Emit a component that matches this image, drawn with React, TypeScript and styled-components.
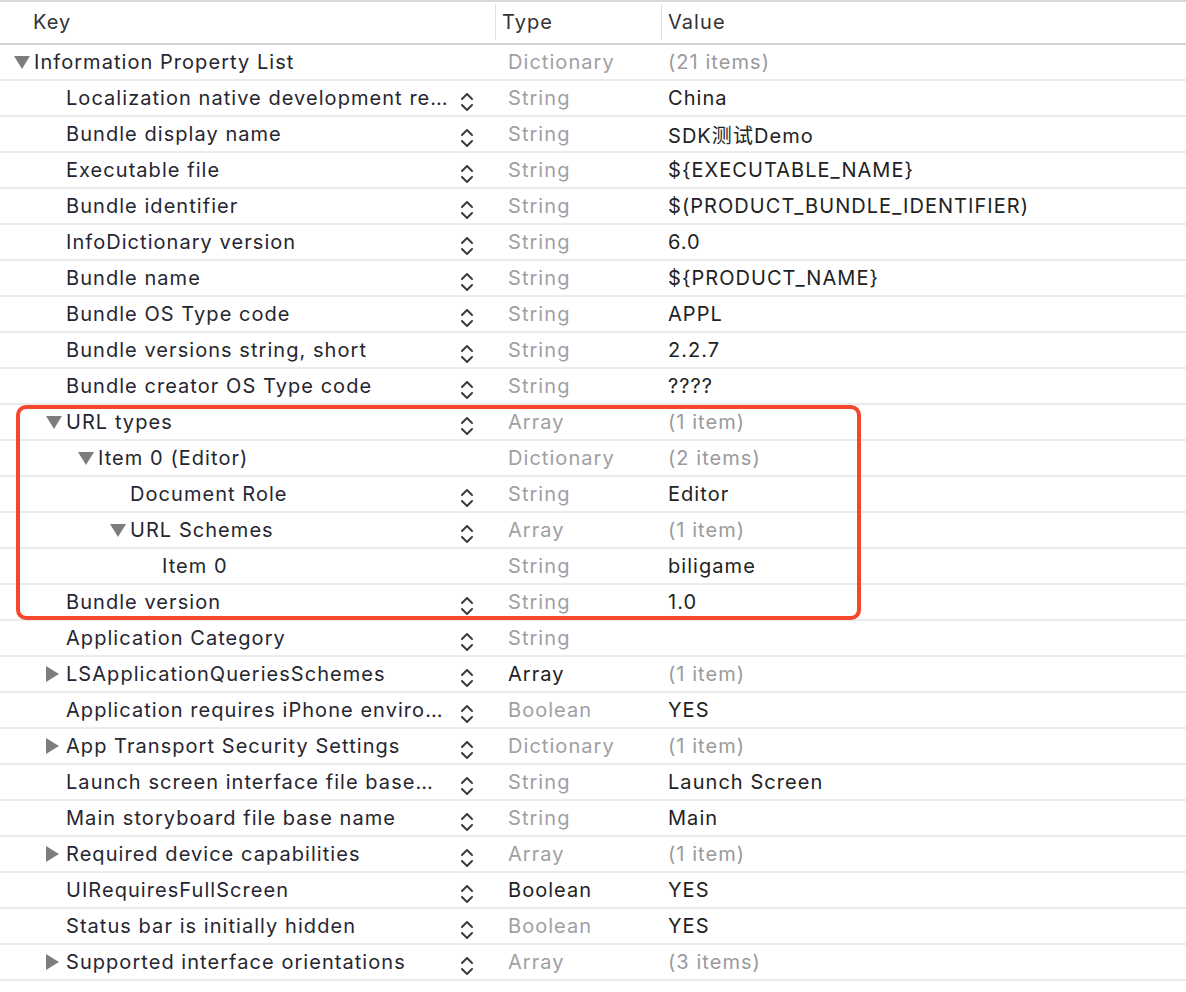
import React from "react";
import styled, { createGlobalStyle } from "styled-components";

const Global = createGlobalStyle`
  html, body { margin: 0; padding: 0; background: #ffffff; }
  body { font-family: "Inter", "Noto Sans CJK SC", sans-serif; }
`;

type RowData = {
  key: string;
  level: number;
  tri?: "down" | "right";
  stepper: boolean;
  type: string;
  typeDark?: boolean;
  value: string;
  valueGray?: boolean;
};

const rows: RowData[] = [
  { key: "Information Property List", level: 0, tri: "down", stepper: false, type: "Dictionary", value: "(21 items)", valueGray: true },
  { key: "Localization native development re…", level: 1, stepper: true, type: "String", value: "China" },
  { key: "Bundle display name", level: 1, stepper: true, type: "String", value: "SDK测试Demo" },
  { key: "Executable file", level: 1, stepper: true, type: "String", value: "${EXECUTABLE_NAME}" },
  { key: "Bundle identifier", level: 1, stepper: true, type: "String", value: "$(PRODUCT_BUNDLE_IDENTIFIER)" },
  { key: "InfoDictionary version", level: 1, stepper: true, type: "String", value: "6.0" },
  { key: "Bundle name", level: 1, stepper: true, type: "String", value: "${PRODUCT_NAME}" },
  { key: "Bundle OS Type code", level: 1, stepper: true, type: "String", value: "APPL" },
  { key: "Bundle versions string, short", level: 1, stepper: true, type: "String", value: "2.2.7" },
  { key: "Bundle creator OS Type code", level: 1, stepper: true, type: "String", value: "????" },
];

const highlighted: RowData[] = [
  { key: "URL types", level: 1, tri: "down", stepper: true, type: "Array", value: "(1 item)", valueGray: true },
  { key: "Item 0 (Editor)", level: 2, tri: "down", stepper: false, type: "Dictionary", value: "(2 items)", valueGray: true },
  { key: "Document Role", level: 3, stepper: true, type: "String", value: "Editor" },
  { key: "URL Schemes", level: 3, tri: "down", stepper: true, type: "Array", value: "(1 item)", valueGray: true },
  { key: "Item 0", level: 4, stepper: false, type: "String", value: "biligame" },
  { key: "Bundle version", level: 1, stepper: true, type: "String", value: "1.0" },
];

const rest: RowData[] = [
  { key: "Application Category", level: 1, stepper: true, type: "String", value: "" },
  { key: "LSApplicationQueriesSchemes", level: 1, tri: "right", stepper: true, type: "Array", typeDark: true, value: "(1 item)", valueGray: true },
  { key: "Application requires iPhone enviro…", level: 1, stepper: true, type: "Boolean", value: "YES" },
  { key: "App Transport Security Settings", level: 1, tri: "right", stepper: true, type: "Dictionary", value: "(1 item)", valueGray: true },
  { key: "Launch screen interface file base…", level: 1, stepper: true, type: "String", value: "Launch Screen" },
  { key: "Main storyboard file base name", level: 1, stepper: true, type: "String", value: "Main" },
  { key: "Required device capabilities", level: 1, tri: "right", stepper: true, type: "Array", value: "(1 item)", valueGray: true },
  { key: "UIRequiresFullScreen", level: 1, stepper: true, type: "Boolean", typeDark: true, value: "YES" },
  { key: "Status bar is initially hidden", level: 1, stepper: true, type: "Boolean", value: "YES" },
  { key: "Supported interface orientations", level: 1, tri: "right", stepper: true, type: "Array", value: "(3 items)", valueGray: true },
];

const Page = styled.div`
  width: 1186px;
  height: 992px;
  background: #fff;
  border-top: 2px solid #d9d9d9;
  box-sizing: border-box;
  overflow: hidden;
  font-size: 20px;
  letter-spacing: 1.05px;
  color: #262626;
`;

const Header = styled.div`
  display: grid;
  grid-template-columns: 495px 166px 1fr;
  height: 41px;
  border-bottom: 2px solid #d6d6d6;
  align-items: center;
`;

const HeadCell = styled.div<{ $divider?: boolean; $pad: number }>`
  height: 36px;
  display: flex;
  align-items: center;
  padding-left: ${(p) => p.$pad}px;
  border-left: ${(p) => (p.$divider ? "1px solid #e2e2e2" : "none")};
  color: #333;
  margin-top: -1px;
`;

const Row = styled.div`
  display: grid;
  grid-template-columns: 495px 166px 1fr;
  height: 34px;
  border-bottom: 2px solid #ebebeb;
  align-items: center;
`;

const KeyCell = styled.div<{ $level: number }>`
  display: flex;
  align-items: center;
  height: 100%;
  padding-left: ${(p) => 14 + p.$level * 32}px;
  padding-right: 21px;
  min-width: 0;
`;

const TriSlot = styled.span`
  width: 20px;
  flex: none;
  display: flex;
  align-items: center;
`;

const KeyText = styled.span`
  flex: 1;
  white-space: nowrap;
  overflow: hidden;
  color: #262630;
`;

const StepperBox = styled.span`
  width: 14px;
  height: 22px;
  flex: none;
  margin-top: 7px;
  display: flex;
`;

const TypeCell = styled.div<{ $dark?: boolean }>`
  padding-left: 13px;
  color: ${(p) => (p.$dark ? "#222" : "#a0a0a4")};
  white-space: nowrap;
`;

const ValueCell = styled.div<{ $gray?: boolean }>`
  padding-left: 7px;
  color: ${(p) => (p.$gray ? "#9a9a9e" : "#222")};
  white-space: nowrap;
`;

const Highlight = styled.div`
  position: relative;
  &::after {
    content: "";
    position: absolute;
    left: 16px;
    top: 0;
    width: 845px;
    bottom: 1px;
    border: 4px solid #f5472b;
    border-radius: 10px;
    box-sizing: border-box;
    pointer-events: none;
  }
`;

const Triangle = ({ dir }: { dir: "down" | "right" }) =>
  dir === "down" ? (
    <svg width="16" height="13" viewBox="0 0 16 13">
      <polygon points="0,0 16,0 8,13" fill="#7d7d7d" />
    </svg>
  ) : (
    <svg width="13" height="16" viewBox="0 0 13 16">
      <polygon points="0,0 13,8 0,16" fill="#7d7d7d" />
    </svg>
  );

const Stepper = () => (
  <StepperBox>
    <svg width="14" height="22" viewBox="0 0 14 22">
      <polyline points="2,8 7,3 12,8" fill="none" stroke="#3c3c3c" strokeWidth="2" strokeLinecap="round" strokeLinejoin="round" />
      <polyline points="2,14 7,19 12,14" fill="none" stroke="#3c3c3c" strokeWidth="2" strokeLinecap="round" strokeLinejoin="round" />
    </svg>
  </StepperBox>
);

const PlistRow = ({ r }: { r: RowData }) => (
  <Row>
    <KeyCell $level={r.level}>
      <TriSlot>{r.tri ? <Triangle dir={r.tri} /> : null}</TriSlot>
      <KeyText>{r.key}</KeyText>
      {r.stepper ? <Stepper /> : null}
    </KeyCell>
    <TypeCell $dark={r.typeDark}>{r.type}</TypeCell>
    <ValueCell $gray={r.valueGray}>{r.value}</ValueCell>
  </Row>
);

export default function App() {
  return (
    <>
      <Global />
      <Page>
        <Header>
          <HeadCell $pad={33}>Key</HeadCell>
          <HeadCell $divider $pad={6}>Type</HeadCell>
          <HeadCell $divider $pad={6}>Value</HeadCell>
        </Header>
        {rows.map((r, i) => (
          <PlistRow key={"a" + i} r={r} />
        ))}
        <Highlight>
          {highlighted.map((r, i) => (
            <PlistRow key={"b" + i} r={r} />
          ))}
        </Highlight>
        {rest.map((r, i) => (
          <PlistRow key={"c" + i} r={r} />
        ))}
      </Page>
    </>
  );
}
